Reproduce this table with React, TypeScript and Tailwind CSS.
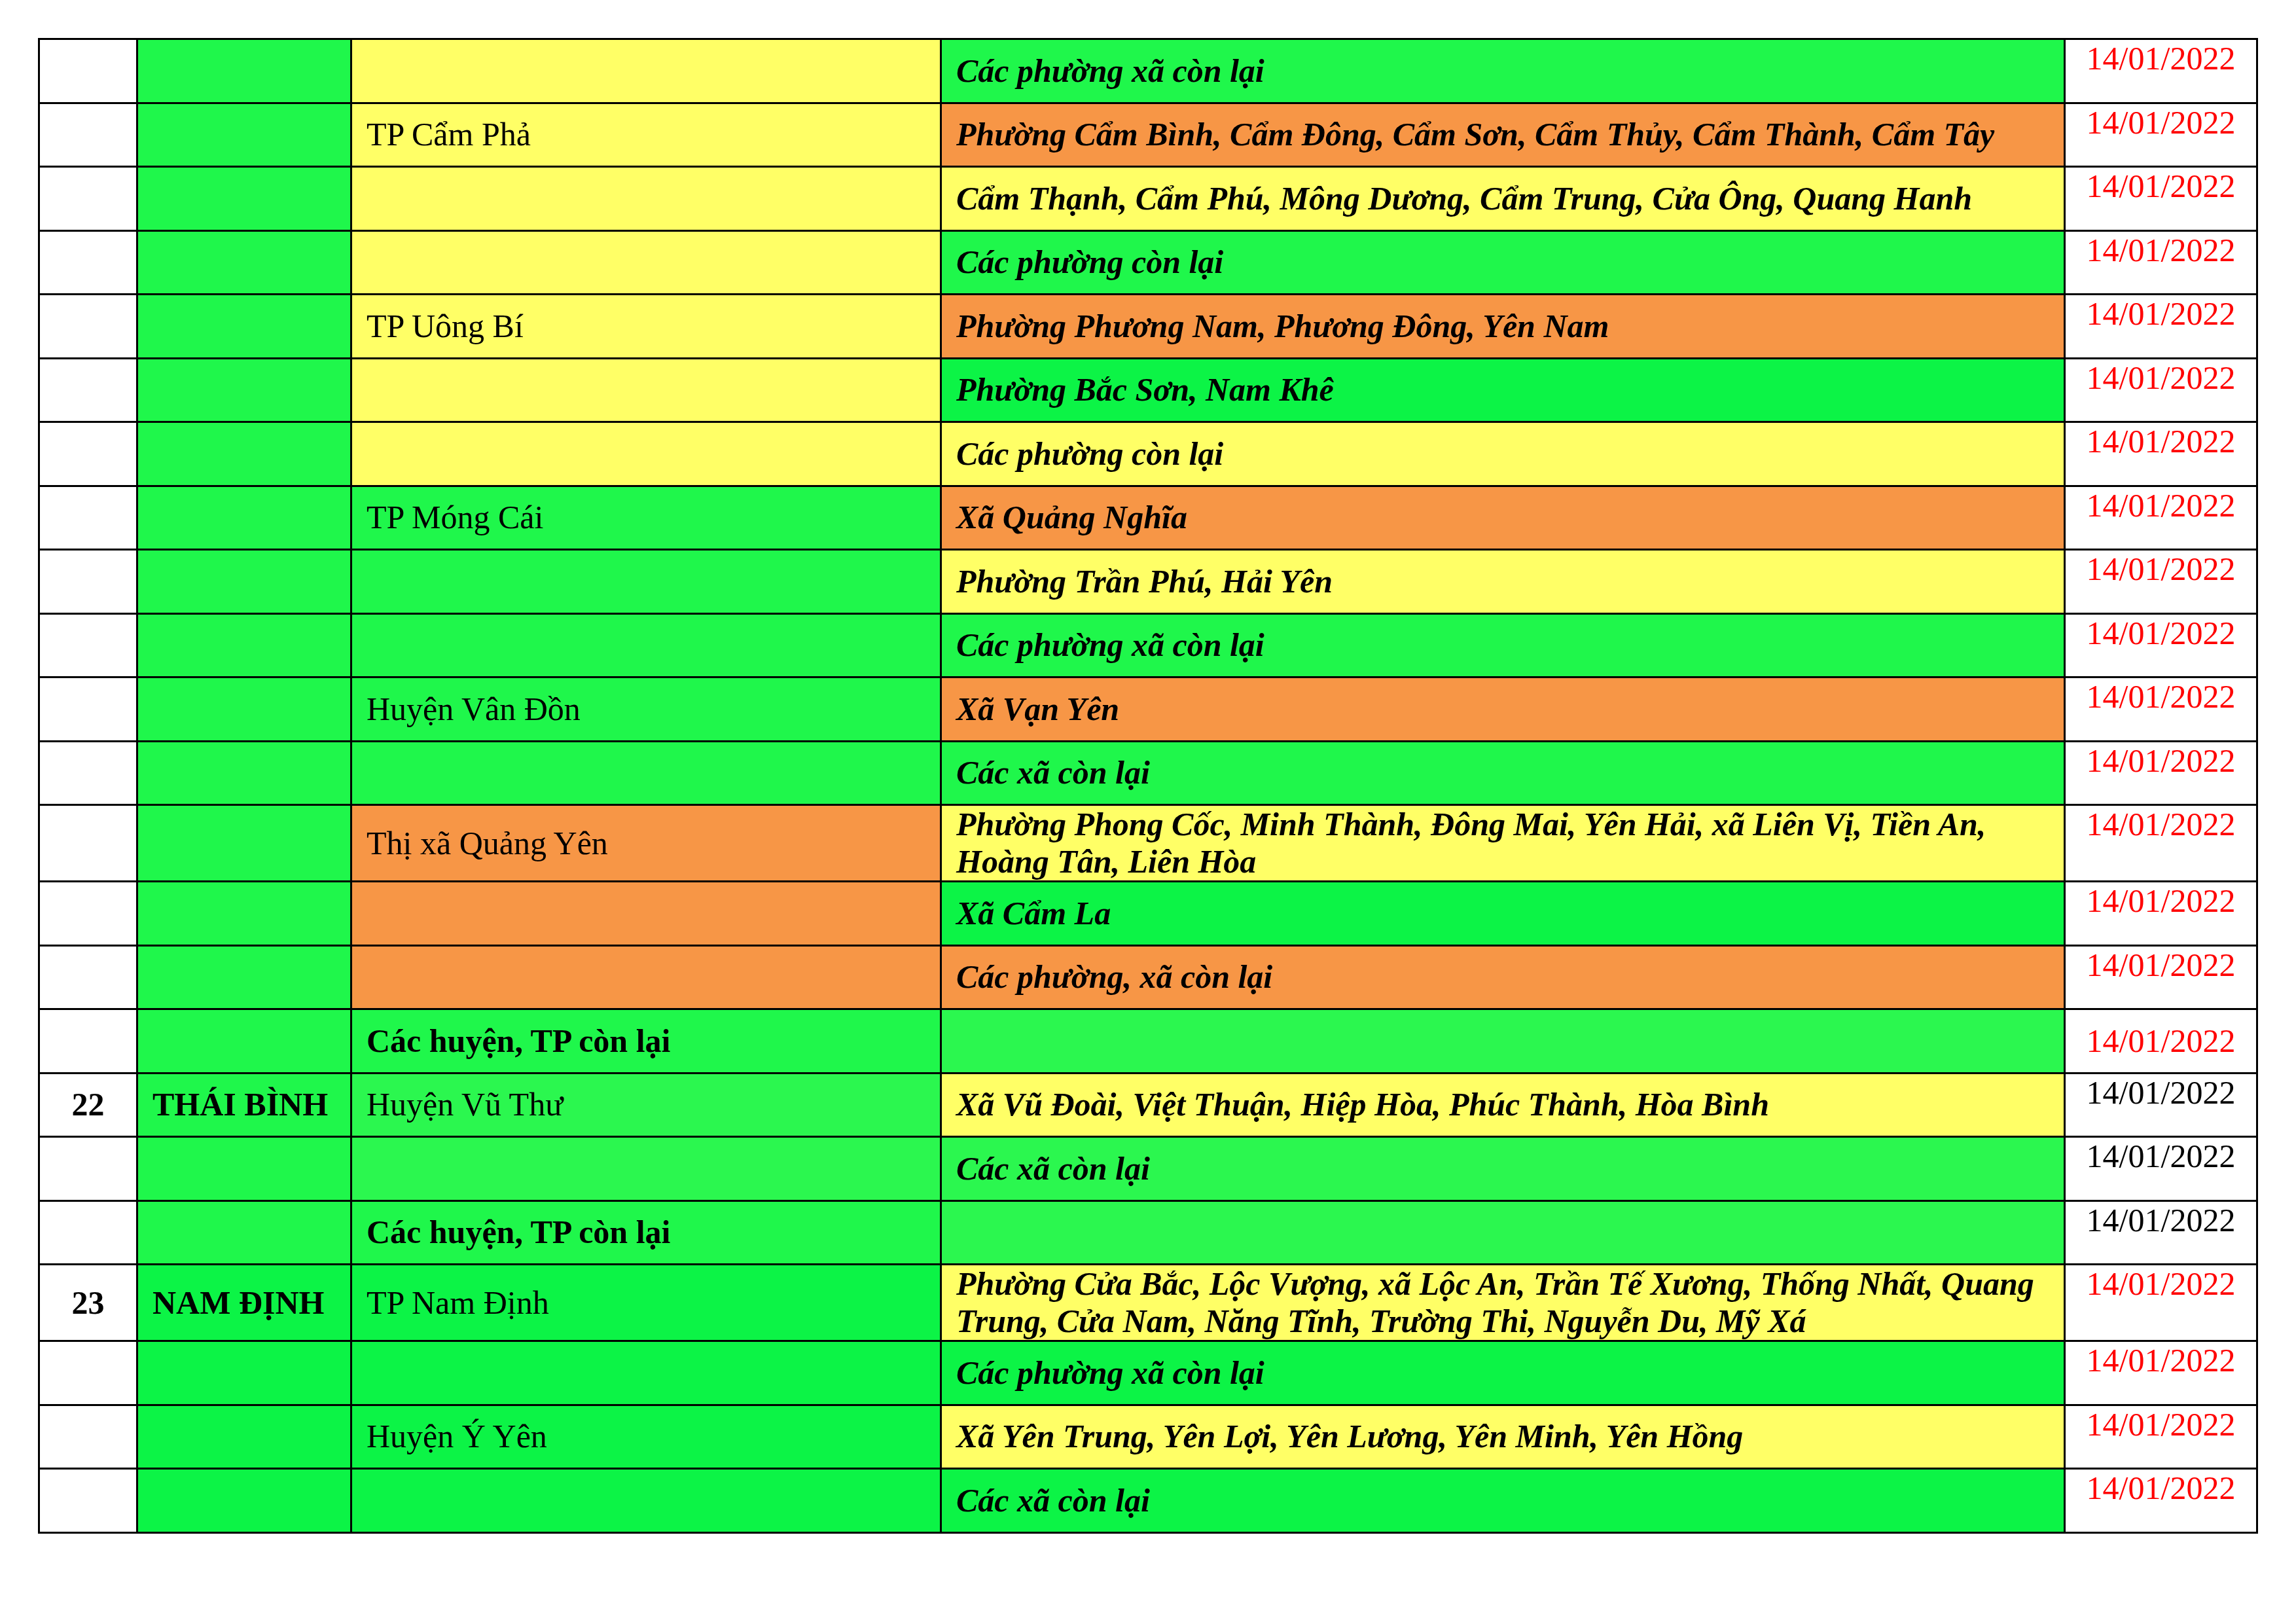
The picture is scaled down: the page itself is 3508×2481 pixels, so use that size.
import React from "react";

type Bg = "white" | "ga" | "gb" | "gc" | "yellow" | "orange";

const bgClass: Record<Bg, string> = {
  white: "bg-white",
  ga: "bg-[#1ff74b]",
  gb: "bg-[#0cf446]",
  gc: "bg-[#2bf74f]",
  yellow: "bg-[#ffff66]",
  orange: "bg-[#f79646]",
};

type Row = {
  num?: string;
  province?: string;
  provinceBg: Bg;
  district?: string;
  districtBold?: boolean;
  districtBg: Bg;
  ward?: string;
  wardBg: Bg;
  dateBlack?: boolean;
  dateMiddle?: boolean;
  tall?: boolean;
};

const rows: Row[] = [
  { provinceBg: "ga", districtBg: "yellow", ward: "Các phường xã còn lại", wardBg: "ga" },
  { provinceBg: "ga", district: "TP Cẩm Phả", districtBg: "yellow", ward: "Phường Cẩm Bình, Cẩm Đông, Cẩm Sơn, Cẩm Thủy, Cẩm Thành, Cẩm Tây", wardBg: "orange" },
  { provinceBg: "ga", districtBg: "yellow", ward: "Cẩm Thạnh, Cẩm Phú, Mông Dương, Cẩm Trung, Cửa Ông, Quang Hanh", wardBg: "yellow" },
  { provinceBg: "ga", districtBg: "yellow", ward: "Các phường còn lại", wardBg: "ga" },
  { provinceBg: "ga", district: "TP Uông Bí", districtBg: "yellow", ward: "Phường Phương Nam, Phương Đông, Yên Nam", wardBg: "orange" },
  { provinceBg: "ga", districtBg: "yellow", ward: "Phường Bắc Sơn, Nam Khê", wardBg: "gb" },
  { provinceBg: "ga", districtBg: "yellow", ward: "Các phường còn lại", wardBg: "yellow" },
  { provinceBg: "ga", district: "TP Móng Cái", districtBg: "ga", ward: "Xã Quảng Nghĩa", wardBg: "orange" },
  { provinceBg: "ga", districtBg: "ga", ward: "Phường Trần Phú, Hải Yên", wardBg: "yellow" },
  { provinceBg: "ga", districtBg: "ga", ward: "Các phường xã còn lại", wardBg: "ga" },
  { provinceBg: "ga", district: "Huyện Vân Đồn", districtBg: "ga", ward: "Xã Vạn Yên", wardBg: "orange" },
  { provinceBg: "ga", districtBg: "ga", ward: "Các xã còn lại", wardBg: "ga" },
  {
    provinceBg: "ga",
    district: "Thị xã Quảng Yên",
    districtBg: "orange",
    ward: "Phường Phong Cốc, Minh Thành, Đông Mai, Yên Hải, xã Liên Vị, Tiền An, Hoàng Tân, Liên Hòa",
    wardBg: "yellow",
    tall: true,
  },
  { provinceBg: "ga", districtBg: "orange", ward: "Xã Cẩm La", wardBg: "gb" },
  { provinceBg: "ga", districtBg: "orange", ward: "Các phường, xã còn lại", wardBg: "orange" },
  { provinceBg: "ga", district: "Các huyện, TP còn lại", districtBold: true, districtBg: "ga", wardBg: "gc", dateMiddle: true },
  { num: "22", province: "THÁI BÌNH", provinceBg: "ga", district: "Huyện Vũ Thư", districtBg: "gc", ward: "Xã Vũ Đoài, Việt Thuận, Hiệp Hòa, Phúc Thành, Hòa Bình", wardBg: "yellow", dateBlack: true },
  { provinceBg: "ga", districtBg: "gc", ward: "Các xã còn lại", wardBg: "gc", dateBlack: true },
  { provinceBg: "ga", district: "Các huyện, TP còn lại", districtBold: true, districtBg: "ga", wardBg: "gc", dateBlack: true },
  {
    num: "23",
    province: "NAM ĐỊNH",
    provinceBg: "gb",
    district: "TP Nam Định",
    districtBg: "gb",
    ward: "Phường Cửa Bắc, Lộc Vượng, xã Lộc An, Trần Tế Xương, Thống Nhất, Quang Trung, Cửa Nam, Năng Tĩnh, Trường Thi, Nguyễn Du, Mỹ Xá",
    wardBg: "yellow",
    tall: true,
  },
  { provinceBg: "gb", districtBg: "gb", ward: "Các phường xã còn lại", wardBg: "gb" },
  { provinceBg: "gb", district: "Huyện Ý Yên", districtBg: "gb", ward: "Xã Yên Trung, Yên Lợi, Yên Lương, Yên Minh, Yên Hồng", wardBg: "yellow" },
  { provinceBg: "gb", districtBg: "gb", ward: "Các xã còn lại", wardBg: "gb" },
];

const cell = "border-[3px] border-black p-0";

export default function App() {
  return (
    <div className="w-[3508px] h-[2481px] bg-white pt-[58px] pl-[58px] font-['Liberation_Serif','Times_New_Roman',serif] text-[50px] leading-[57px] text-black">
      <table className="border-collapse table-fixed w-[3392px]">
        <colgroup>
          <col className="w-[150px]" />
          <col className="w-[327px]" />
          <col className="w-[901px]" />
          <col className="w-[1717px]" />
          <col className="w-[294px]" />
        </colgroup>
        <tbody>
          {rows.map((r, i) => (
            <tr key={i} className={r.tall ? "h-[117px]" : "h-[97.5px]"}>
              <td className={`${cell} bg-white text-center align-middle font-bold`}>{r.num}</td>
              <td className={`${cell} ${bgClass[r.provinceBg]} align-middle pl-[22px] font-bold whitespace-nowrap`}>
                {r.province}
              </td>
              <td className={`${cell} ${bgClass[r.districtBg]} align-middle pl-[22px] ${r.districtBold ? "font-bold" : ""}`}>
                {r.district}
              </td>
              <td className={`${cell} ${bgClass[r.wardBg]} align-middle pl-[22px] pr-[16px] font-bold italic`}>
                {r.ward}
              </td>
              <td
                className={`${cell} bg-white text-center ${r.dateMiddle ? "align-middle" : "align-top"} ${
                  r.dateBlack ? "text-black" : "text-[#ff0000]"
                }`}
              >
                14/01/2022
              </td>
            </tr>
          ))}
        </tbody>
      </table>
    </div>
  );
}
